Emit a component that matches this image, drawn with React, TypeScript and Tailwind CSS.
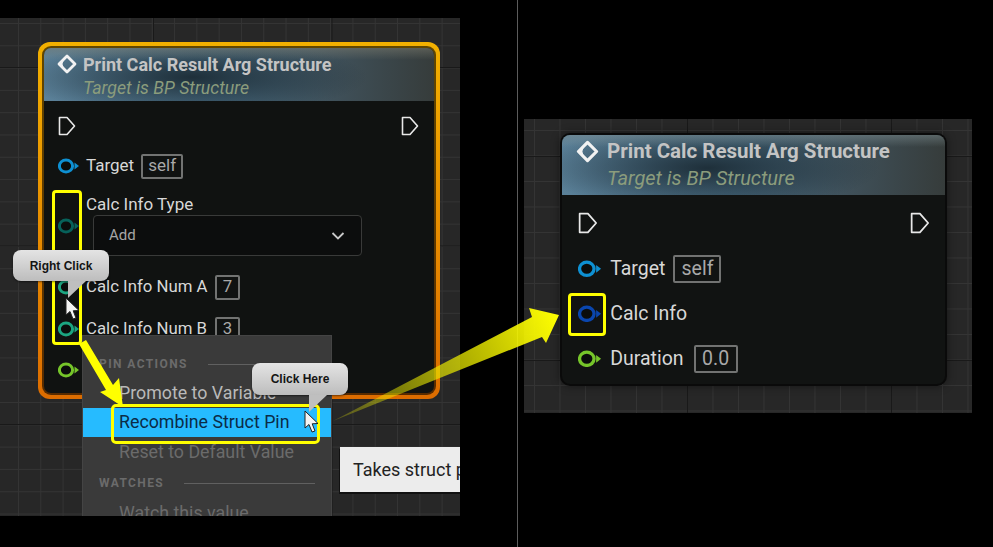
function Pin({ color, size = 1 }: { color: string; size?: number }) {
  return (
    <svg width={22 * size} height={16 * size} viewBox="0 0 22 16" className="shrink-0">
      <ellipse cx="8" cy="8" rx="6.6" ry="6" fill="#0b0d0c" stroke={color} strokeWidth="3" />
      <path d="M16.5 4.5 L21 8 L16.5 11.5 Z" fill={color} />
    </svg>
  )
}

function ExecPin({ size = 1 }: { size?: number }) {
  return (
    <svg width={18 * size} height={20 * size} viewBox="0 0 18 20" className="shrink-0">
      <path d="M1.5 1.5 H9 L16.5 10 L9 18.5 H1.5 Z" fill="none" stroke="#e8e8e8" strokeWidth="1.6" strokeLinejoin="round" />
    </svg>
  )
}

function FuncIcon({ size = 22 }: { size?: number }) {
  return (
    <svg width={size} height={size} viewBox="0 0 22 22" className="shrink-0">
      <path d="M11 3 L19 11 L11 19 L3 11 Z" fill="none" stroke="#f2f2f2" strokeWidth="2.8" strokeLinejoin="round" />
      <path d="M2 11 L8.5 4.5 L6.5 11 L8.5 17.5 Z" fill="#f2f2f2" />
    </svg>
  )
}

function Cursor({ className }: { className: string }) {
  return (
    <svg width="16" height="25" viewBox="0 0 16 25" className={className}>
      <path d="M1 1 L1 18 L5 14.5 L8 22 L11 21 L8.2 13.8 L14 13.5 Z" fill="#f4f4f4" stroke="#222222" strokeWidth="1" strokeLinejoin="round" />
    </svg>
  )
}

function Callout({ label, className, tail }: { label: string; className: string; tail: string }) {
  return (
    <div className={className}>
      <div className="relative flex h-full w-full items-center justify-center rounded-lg bg-gradient-to-b from-[#e4e4e4] to-[#bdbdbd] font-['Liberation_Sans',sans-serif] text-xs font-bold text-[#141414] shadow-[0_1px_2px_rgba(0,0,0,0.5)]">
        {label}
      </div>
      <svg width="32" height="20" viewBox="0 0 32 20" className={tail}>
        <path d="M2 0 L20 0 L2 17 Z" fill="#bfbfbf" />
      </svg>
    </div>
  )
}

function ValueBox({ value, className }: { value: string; className: string }) {
  return (
    <span className={`flex items-center justify-center rounded-[2px] border-2 border-[#727372] text-[#a9a9a9] ${className}`}>
      {value}
    </span>
  )
}

function MenuHeading({ label, lineClass }: { label: string; lineClass: string }) {
  return (
    <div className="flex h-[30px] items-center pl-[16px] pr-[16px]">
      <span className="text-xs font-bold tracking-[1.4px] text-[#6b6b6b]">{label}</span>
      <span className={`h-px bg-[#606060] ${lineClass}`} />
    </div>
  )
}

export default function App() {
  return (
    <div className="relative flex h-[547px] w-[993px] overflow-hidden bg-black font-['Roboto',sans-serif]">
      {/* left panel */}
      <div className="relative mt-[18px] h-[498px] w-[460px] shrink-0 overflow-hidden bg-[#272727] bg-[linear-gradient(#191919_1px,transparent_1px),linear-gradient(90deg,#191919_1px,transparent_1px),linear-gradient(#343434_1px,transparent_1px),linear-gradient(90deg,#343434_1px,transparent_1px)] bg-[size:178.5px_178.5px,178.5px_178.5px,22.3px_22.3px,22.3px_22.3px] bg-[position:153px_49px,153px_49px,18px_5px,18px_5px] pl-[38px] pt-[24px]">
        <div className="h-[357px] w-[402px] rounded-[12px] bg-gradient-to-b from-[#f2b000] to-[#dc6c00] p-[4px]">
          <div className="h-full w-full rounded-[9px] bg-black/60 p-[2px]">
            <div className="h-full w-full overflow-hidden rounded-[7px] bg-[#101211]">
              <div className="relative h-[53px] bg-[radial-gradient(ellipse_45%_70%_at_38%_55%,rgba(28,44,54,0.95),rgba(28,44,54,0)_100%),linear-gradient(90deg,#5b8199_0%,#47697e_45%,#3f5059_75%,#363c3b_100%)] pl-[12px] pt-[5px]">
                <div className="absolute inset-x-0 top-0 h-[12px] bg-gradient-to-b from-[#7d7d70]/50 to-transparent" />
                <div className="relative flex h-[22px] items-center gap-[5px] text-[18px] font-bold text-[#c4c4c4]">
                  <FuncIcon />
                  <span className="whitespace-nowrap">Print Calc Result Arg Structure</span>
                </div>
                <div className="relative ml-[27px] mt-[2px] whitespace-nowrap text-[17.7px] italic leading-[22px] text-[#8b9c7c]">Target is BP Structure</div>
              </div>
              <div className="mt-[1px] flex h-[48px] items-center justify-between pl-[14px] pr-[15px]">
                <ExecPin />
                <ExecPin />
              </div>
              <div className="flex h-[32px] items-center gap-[6px] pl-[14px] text-[17px] text-[#d8d8d8]">
                <Pin color="#0e90d2" />
                <span>Target</span>
                <ValueBox value="self" className="ml-[1px] h-[25px] w-[42px]" />
              </div>
              <div className="mt-[12px] flex">
                <div className="ml-[14px] flex h-[64px] w-[28px] items-center">
                  <Pin color="#07615a" />
                </div>
                <div className="flex-1">
                  <div className="h-[20px] text-[17px] leading-[20px] text-[#d8d8d8]">Calc Info Type</div>
                  <div className="ml-[7px] mt-[1px] flex h-[41px] w-[269px] items-center justify-between rounded-[4px] border border-[#393a39] bg-[#0c0d0d] pl-[15px] pr-[16px] text-[15px] text-[#a6a6a6]">
                    <span>Add</span>
                    <svg width="14" height="10" viewBox="0 0 14 10">
                      <path d="M1.5 2 L7 7.5 L12.5 2" fill="none" stroke="#c8c8c8" strokeWidth="1.8" />
                    </svg>
                  </div>
                </div>
              </div>
              <div className="mt-[13px] flex h-[32px] items-center gap-[6px] pl-[14px] text-[16.8px] text-[#d8d8d8]">
                <Pin color="#1ca581" />
                <span className="w-[122px] whitespace-nowrap">Calc Info Num A</span>
                <ValueBox value="7" className="ml-[1px] h-[25px] w-[25px]" />
              </div>
              <div className="mt-[10px] flex h-[32px] items-center gap-[6px] pl-[14px] text-[16.8px] text-[#d8d8d8]">
                <Pin color="#1ca581" />
                <span className="w-[122px] whitespace-nowrap">Calc Info Num B</span>
                <ValueBox value="3" className="ml-[1px] h-[25px] w-[25px]" />
              </div>
              <div className="mt-[9px] flex h-[32px] items-center pl-[14px]">
                <Pin color="#76c52a" />
              </div>
            </div>
          </div>
        </div>

        {/* context menu */}
        <div className="absolute left-[82px] top-[317px] h-[190px] w-[250px] border border-[#444444] bg-[#3a3a3a] pt-[13px] text-[17.8px]">
          <MenuHeading label="PIN ACTIONS" lineClass="ml-[20px] flex-1" />
          <div className="flex h-[29px] items-center pl-[36px] text-[#b9b9b9]">Promote to Variable</div>
          <div className="flex h-[29px] items-center bg-[#26bbff] pl-[36px] text-[#0b2c47]">Recombine Struct Pin</div>
          <div className="flex h-[31px] items-center pl-[36px] text-[#6b6b6b]">Reset to Default Value</div>
          <MenuHeading label="WATCHES" lineClass="ml-[20px] flex-1" />
          <div className="flex h-[30px] items-center pl-[36px] text-[#6b6b6b]">Watch this value</div>
        </div>

        {/* tooltip */}
        <div className="absolute left-[340px] top-[429px] flex h-[45px] w-[130px] items-center whitespace-nowrap bg-[#ececec] pl-[13px] text-[18px] text-[#222222] shadow-[-1px_2px_0_#111111]">
          Takes struct p
        </div>
      </div>

      <div className="ml-[57px] h-full w-px shrink-0 bg-[#5c5c5c]" />

      {/* right panel */}
      <div className="ml-[6px] mt-[119px] h-[294px] w-[448px] shrink-0 overflow-hidden bg-[#272727] bg-[linear-gradient(#191919_1px,transparent_1px),linear-gradient(90deg,#191919_1px,transparent_1px),linear-gradient(#343434_1px,transparent_1px),linear-gradient(90deg,#343434_1px,transparent_1px)] bg-[size:204px_204px,204px_204px,25.5px_25.5px,25.5px_25.5px] bg-[position:163px_37px,163px_37px,10px_11px,10px_11px] pl-[36px] pt-[14px]">
        <div className="h-[253px] w-[387px] rounded-[10px] bg-[#0a0a0a] p-[2px] shadow-[0_0_10px_rgba(0,0,0,0.45)]">
          <div className="h-full w-full overflow-hidden rounded-[8px] bg-[#111312]">
            <div className="relative h-[60px] bg-[radial-gradient(ellipse_45%_70%_at_38%_55%,rgba(28,44,54,0.95),rgba(28,44,54,0)_100%),linear-gradient(90deg,#5b8199_0%,#47697e_45%,#3f5059_75%,#363c3b_100%)] pl-[13px] pt-[4px]">
              <div className="absolute inset-x-0 top-0 h-[12px] bg-gradient-to-b from-[#7d8d90]/50 to-transparent" />
              <div className="relative flex h-[25px] items-center gap-[7px] text-[20.5px] font-bold text-[#c4c4c4]">
                <FuncIcon size={25} />
                <span className="whitespace-nowrap">Print Calc Result Arg Structure</span>
              </div>
              <div className="relative ml-[32px] mt-[2px] whitespace-nowrap text-[20px] italic leading-[25px] text-[#8b9c7c]">Target is BP Structure</div>
            </div>
            <div className="flex h-[51px] items-center justify-between pl-[16px] pr-[15px] pt-[5px]">
              <ExecPin size={1.1} />
              <ExecPin size={1.1} />
            </div>
            <div className="flex h-[45px] items-center gap-[8px] pl-[16px] pt-[1px] text-[19.5px] text-[#d8d8d8]">
              <Pin color="#0e90d2" size={1.1} />
              <span>Target</span>
              <ValueBox value="self" className="h-[28px] w-[48px]" />
            </div>
            <div className="flex h-[45px] items-center gap-[8px] pl-[16px] text-[19.5px] text-[#d8d8d8]">
              <Pin color="#0a46ae" size={1.1} />
              <span>Calc Info</span>
            </div>
            <div className="flex h-[45px] items-center gap-[8px] pl-[16px] text-[19.5px] text-[#d8d8d8]">
              <Pin color="#76c52a" size={1.1} />
              <span>Duration</span>
              <ValueBox value="0.0" className="ml-[2px] h-[28px] w-[44px]" />
            </div>
          </div>
        </div>
      </div>

      {/* annotations */}
      <div className="absolute left-[52px] top-[190px] h-[155px] w-[30px] rounded-[4px] border-[3px] border-[#ffff00]" />
      <div className="absolute left-[111px] top-[404px] h-[40px] w-[209px] rounded-[5px] border-[3px] border-[#ffff00]" />
      <div className="absolute left-[568px] top-[293px] h-[43px] w-[38px] rounded-[4px] border-[3px] border-[#ffff00]" />

      <svg width="993" height="547" viewBox="0 0 993 547" className="pointer-events-none absolute left-0 top-0">
        <defs>
          <linearGradient id="bigArrow" gradientUnits="userSpaceOnUse" x1="333" y1="421" x2="559" y2="315">
            <stop offset="0" stopColor="#ffff00" stopOpacity="0.2" />
            <stop offset="0.5" stopColor="#e6e600" stopOpacity="0.7" />
            <stop offset="1" stopColor="#ffff00" stopOpacity="1" />
          </linearGradient>
        </defs>
        <path d="M333 421 L532 317 L529 308 L559 315 L546 343 L542 337 Z" fill="url(#bigArrow)" />
        <path d="M79 344 L86 340 L113 385 L119 378 L123 407 L100 392 L106 390 Z" fill="#ffff00" />
      </svg>

      <Callout label="Right Click" className="absolute left-[13px] top-[250px] h-[31px] w-[96px]" tail="absolute left-[53px] top-[31px]" />
      <Callout label="Click Here" className="absolute left-[252px] top-[363px] h-[32px] w-[96px]" tail="absolute left-[55px] top-[32px]" />
      <Cursor className="absolute left-[65px] top-[297px]" />
      <Cursor className="absolute left-[304px] top-[410px]" />
    </div>
  )
}
